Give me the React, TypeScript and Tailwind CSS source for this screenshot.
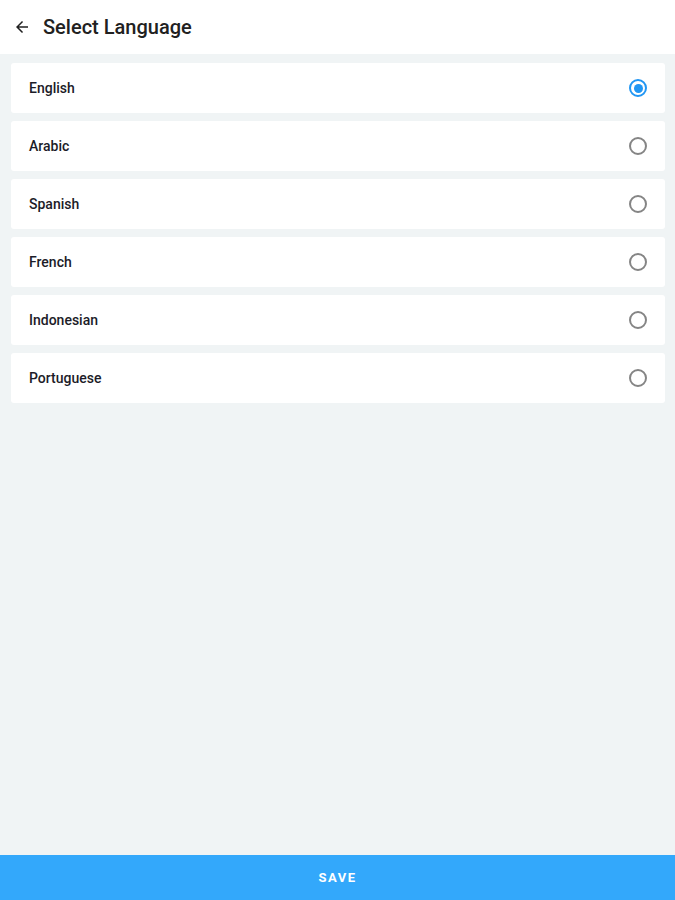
import { useState } from "react";

const languages = ["English", "Arabic", "Spanish", "French", "Indonesian", "Portuguese"];

function Radio({ checked }: { checked: boolean }) {
  if (checked) {
    return (
      <span className="flex h-[18px] w-[18px] items-center justify-center rounded-full border-2 border-[#2196f3]">
        <span className="h-[9px] w-[9px] rounded-full bg-[#2196f3]" />
      </span>
    );
  }
  return <span className="h-[18px] w-[18px] rounded-full border-2 border-[#858585]" />;
}

export default function App() {
  const [selected, setSelected] = useState("English");

  return (
    <div
      className="flex h-[900px] w-[675px] flex-col bg-[#f0f4f5]"
      style={{ fontFamily: "Roboto, 'Liberation Sans', sans-serif" }}
    >
      {/* header */}
      <div className="flex h-[54px] items-center bg-white pl-[13px]">
        <svg width="18" height="18" viewBox="0 0 24 24" className="text-[#212121]">
          <path
            d="M20 11H7.83l5.59-5.59L12 4l-8 8 8 8 1.41-1.41L7.83 13H20v-2z"
            fill="currentColor"
          />
        </svg>
        <h1 className="ml-[12px] text-[20px] font-medium text-[#212121]">Select Language</h1>
      </div>

      {/* list */}
      <div className="flex flex-1 flex-col gap-[8px] pl-[11px] pr-[10px] pt-[9px]">
        {languages.map((lang) => (
          <button
            key={lang}
            onClick={() => setSelected(lang)}
            className="flex h-[50px] items-center justify-between rounded-[3px] bg-white pl-[18px] pr-[18px] text-left"
          >
            <span className="text-[14px] font-medium text-[#1c1c28]">{lang}</span>
            <Radio checked={selected === lang} />
          </button>
        ))}
      </div>

      {/* save */}
      <button className="flex h-[45px] items-center justify-center bg-[#33a8fb] text-[13px] font-bold tracking-[1.5px] text-white">
        SAVE
      </button>
    </div>
  );
}
